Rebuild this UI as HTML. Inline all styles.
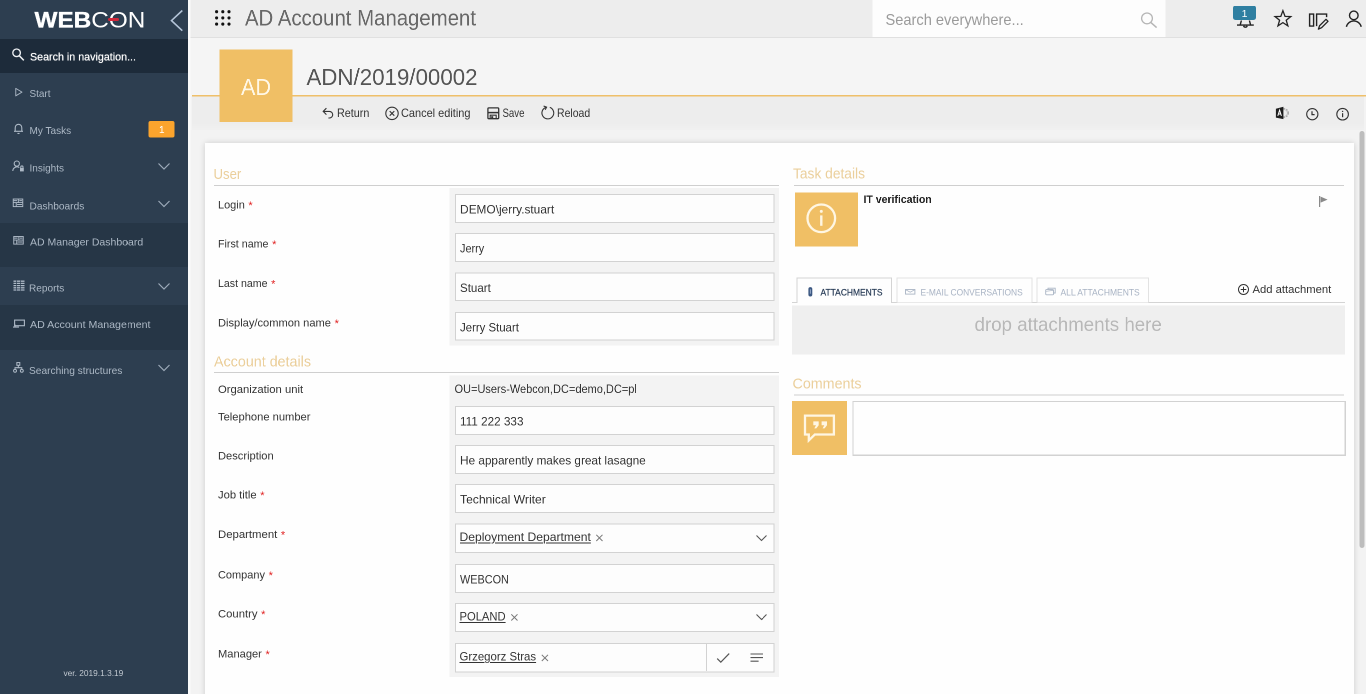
<!DOCTYPE html>
<html lang="en"><head><meta charset="utf-8"><title>AD Account Management</title>
<style>
html,body{margin:0;padding:0}
body{width:1366px;height:694px;overflow:hidden;position:relative;background:#f3f3f3;font-family:"Liberation Sans",sans-serif;}
#s{will-change:transform;position:absolute;left:0;top:0;width:2732px;height:1388px;transform:scale(.5);transform-origin:0 0;overflow:hidden}
.b{position:absolute;box-sizing:border-box;display:block}
.t{position:absolute;white-space:nowrap;transform-origin:0 50%;display:block}
.u{text-decoration:underline;text-decoration-thickness:1.6px;text-underline-offset:3px}
</style></head><body><div id="s">
<div class="b" style="left:376px;top:0px;width:2356px;height:76px;background:#ededed;border-bottom:2px solid #e0e0e0;"></div>
<div class="b" style="left:376px;top:76px;width:2356px;height:116px;background:#f5f5f5;"></div>
<div class="b" style="left:384px;top:193px;width:2344px;height:67px;background:linear-gradient(#ededed 0%,#ededed 75%,#f1f1f1 100%);"></div>
<div class="b" style="left:384px;top:190px;width:2348px;height:3px;background:#efc06a;"></div>
<div class="b" style="left:376px;top:0px;width:5px;height:1388px;background:#fbfbfb;"></div>
<div class="b" style="left:0px;top:0px;width:376px;height:1388px;background:#2d3e50;"></div>
<div class="b" style="left:0px;top:78px;width:376px;height:68px;background:#1d2b3a;"></div>
<div class="b" style="left:0px;top:446px;width:376px;height:88px;background:#263646;"></div>
<div class="b" style="left:0px;top:610px;width:376px;height:90px;background:#263646;"></div>
<span class="t" style="left:68.8px;top:14px;font-size:44px;line-height:51px;color:#fff;transform:scaleX(1.1056);"><b style="-webkit-text-stroke:0.7px #fff">WEB</b>CON</span>
<div class="b" style="left:216px;top:36px;width:22px;height:6px;background:#d2283a;border-radius:3px;"></div>
<svg class="b" style="left:336px;top:16px;" width="36" height="52" viewBox="0 0 18 26"><path d="M14.3 2.5 L3.5 12.6 L14.3 22.7" fill="none" stroke="#b4c4d8" stroke-width="1.6"/></svg>
<svg class="b" style="left:22px;top:94px;" width="30" height="30" viewBox="0 0 15 15"><circle cx="5.6" cy="5.8" r="3.8" fill="none" stroke="#eef1f4" stroke-width="1.35"/><path d="M8.4 8.8 L12.8 13.4" stroke="#eef1f4" stroke-width="1.5" fill="none"/></svg>
<span class="t " style="left:60.0px;top:100px;font-size:22px;line-height:27px;color:#fff;transform:scaleX(0.9738);text-shadow:0 0 1.2px #fff;">Search in navigation...</span>
<span class="t " style="left:58.6px;top:174px;font-size:21px;line-height:25px;color:#adb9c6;transform:scaleX(0.9470);">Start</span>
<span class="t " style="left:58.6px;top:248px;font-size:21px;line-height:25px;color:#adb9c6;transform:scaleX(0.9572);">My Tasks</span>
<span class="t " style="left:58.6px;top:323px;font-size:21px;line-height:25px;color:#adb9c6;transform:scaleX(0.9534);">Insights</span>
<span class="t " style="left:58.6px;top:399px;font-size:21px;line-height:25px;color:#adb9c6;transform:scaleX(0.9679);">Dashboards</span>
<span class="t " style="left:60.0px;top:471px;font-size:21px;line-height:25px;color:#adb9c6;transform:scaleX(0.9997);">AD Manager Dashboard</span>
<span class="t " style="left:58.0px;top:563px;font-size:21px;line-height:25px;color:#adb9c6;transform:scaleX(0.9601);">Reports</span>
<span class="t " style="left:60.0px;top:636px;font-size:21px;line-height:25px;color:#adb9c6;transform:scaleX(1.0120);">AD Account Management</span>
<span class="t " style="left:58.0px;top:728px;font-size:21px;line-height:25px;color:#adb9c6;transform:scaleX(0.9699);">Searching structures</span>
<span class="t " style="left:126.6px;top:1336px;font-size:17px;line-height:21px;color:#c3cad2;transform:scaleX(0.9809);">ver. 2019.1.3.19</span>
<div class="b" style="left:296.6px;top:242.4px;width:52px;height:32.8px;background:#fba42d;border-radius:4px;"></div>
<span class="t " style="left:318.0px;top:247px;font-size:20px;line-height:24px;color:#fff;">1</span>
<svg class="b" style="left:314px;top:324px;" width="28" height="18" viewBox="0 0 14 9"><path d="M1.5 1.5 L7 7 L12.5 1.5" fill="none" stroke="#9dabba" stroke-width="1.2"/></svg>
<svg class="b" style="left:314px;top:399px;" width="28" height="18" viewBox="0 0 14 9"><path d="M1.5 1.5 L7 7 L12.5 1.5" fill="none" stroke="#9dabba" stroke-width="1.2"/></svg>
<svg class="b" style="left:314px;top:563.6px;" width="28" height="18" viewBox="0 0 14 9"><path d="M1.5 1.5 L7 7 L12.5 1.5" fill="none" stroke="#9dabba" stroke-width="1.2"/></svg>
<svg class="b" style="left:314px;top:727px;" width="28" height="18" viewBox="0 0 14 9"><path d="M1.5 1.5 L7 7 L12.5 1.5" fill="none" stroke="#9dabba" stroke-width="1.2"/></svg>
<svg class="b" style="left:28px;top:174px;" width="19.0" height="20.4" viewBox="0 0 11 12"><path d="M2 1.6 L9.3 6 L2 10.4 Z" fill="none" stroke="#adb9c6" stroke-width="1.1" stroke-linejoin="round"/></svg>
<svg class="b" style="left:24px;top:244px;" width="26" height="26" viewBox="0 0 13 13"><path d="M3.2 9.2 V5.6 a3.3 3.3 0 0 1 6.6 0 V9.2 M2 9.3 H11 M5.6 11 a1 1 0 0 0 1.8 0" fill="none" stroke="#adb9c6" stroke-width="1.1"/></svg>
<svg class="b" style="left:24px;top:320px;" width="26" height="26" viewBox="0 0 13 13"><circle cx="4.8" cy="3.6" r="2.6" fill="none" stroke="#adb9c6" stroke-width="1.1"/><path d="M0.8 11 a4.2 4.2 0 0 1 6.5 -3.4" fill="none" stroke="#adb9c6" stroke-width="1.1"/><rect x="8" y="8" width="3.8" height="3.4" fill="#adb9c6"/><path d="M8.8 8 V7 a1.1 1.1 0 0 1 2.2 0 V8" fill="none" stroke="#adb9c6" stroke-width="1.1"/></svg>
<svg class="b" style="left:25.2px;top:397.2px;" width="22" height="17.6" viewBox="0 0 12 10"><rect x="0.6" y="0.6" width="10.8" height="8.6" fill="none" stroke="#adb9c6" stroke-width="1.1"/><path d="M0.6 4.6 H11.4 M6.4 0.6 V4.6 M4 4.6 V9.2 M1 2.4 H5 M7.5 2.4 H10.5 M5 6.8 H10.5" fill="none" stroke="#adb9c6" stroke-width="1.1"/></svg>
<svg class="b" style="left:25.6px;top:472px;" width="22" height="17.6" viewBox="0 0 12 10"><rect x="0.6" y="0.6" width="10.8" height="8.6" fill="none" stroke="#adb9c6" stroke-width="1.1"/><path d="M0.6 4.6 H11.4 M6.4 0.6 V4.6 M4 4.6 V9.2 M1 2.4 H5 M7.5 2.4 H10.5 M5 6.8 H10.5" fill="none" stroke="#adb9c6" stroke-width="1.1"/></svg>
<svg class="b" style="left:26px;top:560px;" width="24" height="22" viewBox="0 0 12 11"><path d="M0.5 1.2 H11.5 M0.5 3.4 H11.5 M0.5 5.6 H11.5 M0.5 7.8 H11.5 M0.5 10 H11.5" fill="none" stroke="#adb9c6" stroke-width="1.3"/><path d="M3.6 0.6 V10.6 M7.6 0.6 V10.6" stroke="#2d3e50" stroke-width="0.7"/></svg>
<svg class="b" style="left:26px;top:639.2px;" width="24" height="18" viewBox="0 0 12 9"><rect x="1.6" y="0.6" width="9.8" height="5.6" fill="none" stroke="#adb9c6" stroke-width="1.1"/><path d="M0 7.6 H6 M2 5 V7.6" fill="none" stroke="#adb9c6" stroke-width="1.1"/></svg>
<svg class="b" style="left:26px;top:724px;" width="22" height="22" viewBox="0 0 12 12"><rect x="4.2" y="0.6" width="3.2" height="3" fill="none" stroke="#adb9c6" stroke-width="1.1"/><path d="M5.8 3.6 V6.2 M2.2 8 V6.2 H9.6 V8" fill="none" stroke="#adb9c6" stroke-width="1.1"/><circle cx="2.2" cy="9.6" r="1.6" fill="none" stroke="#adb9c6" stroke-width="1.1"/><circle cx="9.6" cy="9.6" r="1.6" fill="none" stroke="#adb9c6" stroke-width="1.1"/></svg>
<svg class="b" style="left:428px;top:18px;" width="36" height="36" viewBox="0 0 18 18"><circle cx="2.6" cy="2.7" r="1.55" fill="#111"/><circle cx="2.6" cy="8.9" r="1.55" fill="#111"/><circle cx="2.6" cy="15.1" r="1.55" fill="#111"/><circle cx="8.8" cy="2.7" r="1.55" fill="#111"/><circle cx="8.8" cy="8.9" r="1.55" fill="#111"/><circle cx="8.8" cy="15.1" r="1.55" fill="#111"/><circle cx="15" cy="2.7" r="1.55" fill="#111"/><circle cx="15" cy="8.9" r="1.55" fill="#111"/><circle cx="15" cy="15.1" r="1.55" fill="#111"/></svg>
<span class="t " style="left:490.0px;top:10px;font-size:44.4px;line-height:51px;color:#686868;transform:scaleX(0.9176);">AD Account Management</span>
<div class="b" style="left:1745px;top:0px;width:586px;height:74px;background:#fdfdfd;"></div>
<span class="t " style="left:1771.2px;top:20px;font-size:32px;line-height:38px;color:#9a9a9a;transform:scaleX(0.9141);">Search everywhere...</span>
<svg class="b" style="left:2278px;top:22px;" width="40" height="36" viewBox="0 0 20 18"><circle cx="8" cy="7.4" r="5.4" fill="none" stroke="#b5b5b5" stroke-width="1.3"/><path d="M11.8 11.4 L17.6 16.6" stroke="#b5b5b5" stroke-width="1.5"/></svg>
<svg class="b" style="left:2472px;top:41.2px;" width="38" height="20" viewBox="0 0 19 10"><path d="M1 4.6 H17.8 M4.2 4.4 L5.4 0 M14.6 4.4 L13.4 0 M7.6 5.4 a1.9 1.9 0 0 0 3.6 0" fill="none" stroke="#222" stroke-width="1.4"/></svg>
<div class="b" style="left:2466px;top:11px;width:46px;height:29px;background:#2f7fa1;border-radius:5px;"></div>
<span class="t " style="left:2483.2px;top:14px;font-size:21px;line-height:25px;color:#fff;">1</span>
<svg class="b" style="left:2545.6px;top:18.4px;" width="40.4" height="36.8" viewBox="0 0 22 20"><path d="M10.8 1.8 L13.1 8 L19.4 8.2 L14.4 12.2 L16.2 18.4 L10.8 14.8 L5.4 18.4 L7.2 12.2 L2.2 8.2 L8.5 8 Z" fill="none" stroke="#222" stroke-width="1.4" stroke-linejoin="miter"/></svg>
<svg class="b" style="left:2616px;top:22.8px;" width="44" height="40" viewBox="0 0 22 20"><path d="M1.6 2.6 H5.6 V14.6 H1.6 Z" fill="none" stroke="#222" stroke-width="1.4"/><path d="M8.6 14.6 V2.6 H18.6 V5.6" fill="none" stroke="#222" stroke-width="1.4"/><path d="M10.4 17.6 L11.6 14.2 L18 7.8 L20 9.8 L13.6 16.2 Z" fill="none" stroke="#222" stroke-width="1.3" stroke-linejoin="round"/></svg>
<svg class="b" style="left:2690px;top:18px;" width="36" height="40" viewBox="0 0 18 20"><circle cx="8.8" cy="6.4" r="4.3" fill="none" stroke="#222" stroke-width="1.4"/><path d="M1.4 17.8 a7.6 7.6 0 0 1 14.8 0" fill="none" stroke="#222" stroke-width="1.4"/></svg>
<div class="b" style="left:439px;top:99px;width:146px;height:145px;background:#f0bf65;"></div>
<span class="t " style="left:482.0px;top:147px;font-size:46px;line-height:54px;color:#fff8e8;transform:scaleX(0.9389);">AD</span>
<span class="t " style="left:613.0px;top:126px;font-size:47px;line-height:55px;color:#555;transform:scaleX(0.9484);">ADN/2019/00002</span>
<svg class="b" style="left:642px;top:212px;" width="28" height="28" viewBox="0 0 14 14"><path d="M5.4 2.2 L2.2 5.4 L5.4 8.6 M2.4 5.4 H8.4 a3.3 3.3 0 0 1 0 6.6 H7.4" fill="none" stroke="#333" stroke-width="1.1"/></svg>
<span class="t " style="left:673.6px;top:212px;font-size:23.4px;line-height:28px;color:#333;transform:scaleX(0.9226);">Return</span>
<svg class="b" style="left:769px;top:212px;" width="30" height="30" viewBox="0 0 15 15"><circle cx="7.5" cy="7.4" r="6.2" fill="none" stroke="#333" stroke-width="1.1"/><path d="M5.2 5.1 L9.8 9.7 M9.8 5.1 L5.2 9.7" fill="none" stroke="#333" stroke-width="1.1"/></svg>
<span class="t " style="left:802.0px;top:212px;font-size:23.4px;line-height:28px;color:#333;transform:scaleX(0.9373);">Cancel editing</span>
<svg class="b" style="left:974px;top:214px;" width="26" height="26" viewBox="0 0 13 13"><rect x="0.9" y="0.9" width="10.8" height="10.8" rx="1" fill="none" stroke="#333" stroke-width="1.3"/><path d="M1 5.6 H11.6" stroke="#333" stroke-width="1.5"/><path d="M3.2 11.4 V8.2 H9.2 V11.4" fill="none" stroke="#333" stroke-width="1.1"/><rect x="4.2" y="9.2" width="2" height="2.2" fill="#333"/></svg>
<span class="t " style="left:1005.4px;top:212px;font-size:23.4px;line-height:28px;color:#333;transform:scaleX(0.8249);">Save</span>
<svg class="b" style="left:1080px;top:210px;" width="32" height="32" viewBox="0 0 16 16"><path d="M6.2 2.3 a5.9 5.9 0 1 0 3.6 0.1" fill="none" stroke="#333" stroke-width="1.1" stroke-width="1.2"/><path d="M3.6 1 L6.6 2.2 L5.2 4.8" fill="none" stroke="#333" stroke-width="1.1"/></svg>
<span class="t " style="left:1114.2px;top:212px;font-size:23.4px;line-height:28px;color:#333;transform:scaleX(0.8954);">Reload</span>
<svg class="b" style="left:2550px;top:212px;" width="30" height="28" viewBox="0 0 15 14"><circle cx="9" cy="7" r="4.3" fill="none" stroke="#a8a8a8" stroke-width="1.3" stroke-dasharray="1.7 1.1"/><circle cx="9" cy="7" r="3.4" fill="none" stroke="#c4c4c4" stroke-width="0.8"/><path d="M0.9 2.8 L8.4 0.7 V13.1 L0.9 11.6 Z" fill="#1e1e1e"/><path d="M2.8 9.9 L4.6 4.2 L6.4 9.9 M3.4 8 H5.8" fill="none" stroke="#fff" stroke-width="1"/></svg>
<svg class="b" style="left:2610px;top:214px;" width="30" height="30" viewBox="0 0 15 15"><circle cx="7.3" cy="7.2" r="5.6" fill="none" stroke="#333" stroke-width="1.1"/><path d="M7 4.2 V7.6 H9.6" fill="none" stroke="#333" stroke-width="1.2"/></svg>
<svg class="b" style="left:2670px;top:214px;" width="30" height="30" viewBox="0 0 15 15"><circle cx="7.6" cy="7.2" r="5.8" fill="none" stroke="#333" stroke-width="1.1"/><path d="M7.6 6.2 V10.2" stroke="#333" stroke-width="1.2"/><circle cx="7.6" cy="4.4" r="0.7" fill="#333"/></svg>
<div class="b" style="left:410px;top:286px;width:2298px;height:1120px;background:#fefefe;box-shadow:0 0 12px rgba(0,0,0,0.16);"></div>
<div class="b" style="left:2719px;top:262px;width:10px;height:834px;background:#bdbdbd;border-radius:5px;"></div>
<span class="t " style="left:427.4px;top:330px;font-size:29.6px;line-height:35px;color:#ebcf9b;transform:scaleX(0.8896);">User</span>
<div class="b" style="left:428px;top:370px;width:1130px;height:2px;background:#cfcfcf;"></div>
<div class="b" style="left:899px;top:376px;width:659px;height:314.6px;background:#f3f3f3;"></div>
<span class="t " style="left:428.4px;top:705px;font-size:29.6px;line-height:35px;color:#ebcf9b;transform:scaleX(0.9664);">Account details</span>
<div class="b" style="left:428px;top:744px;width:1130px;height:2px;background:#cfcfcf;"></div>
<div class="b" style="left:899px;top:751px;width:659px;height:603px;background:#f3f3f3;"></div>
<span class="t " style="left:436.4px;top:396px;font-size:22.6px;line-height:27px;color:#333;transform:scaleX(0.9693);">Login</span>
<span class="t " style="left:496.8px;top:397px;font-size:22px;line-height:27px;color:#e02020;">*</span>
<div class="b" style="left:910px;top:388px;width:639px;height:58px;background:#fdfdfd;border:2px solid #d2d2d2;"></div>
<span class="t " style="left:919.6px;top:405px;font-size:23.4px;line-height:28px;color:#333;transform:scaleX(1.0157);">DEMO\jerry.stuart</span>
<span class="t " style="left:436.4px;top:474px;font-size:22.6px;line-height:27px;color:#333;transform:scaleX(0.9462);">First name</span>
<span class="t " style="left:544.2px;top:475px;font-size:22px;line-height:27px;color:#e02020;">*</span>
<div class="b" style="left:910px;top:466px;width:639px;height:58px;background:#fdfdfd;border:2px solid #d2d2d2;"></div>
<span class="t " style="left:919.6px;top:483px;font-size:23.4px;line-height:28px;color:#333;transform:scaleX(0.9308);">Jerry</span>
<span class="t " style="left:436.4px;top:553px;font-size:22.6px;line-height:27px;color:#333;transform:scaleX(0.9381);">Last name</span>
<span class="t " style="left:542.2px;top:554px;font-size:22px;line-height:27px;color:#e02020;">*</span>
<div class="b" style="left:910px;top:545px;width:639px;height:57px;background:#fdfdfd;border:2px solid #d2d2d2;"></div>
<span class="t " style="left:919.6px;top:562px;font-size:23.4px;line-height:28px;color:#333;transform:scaleX(0.9867);">Stuart</span>
<span class="t " style="left:436.4px;top:632px;font-size:22.6px;line-height:27px;color:#333;transform:scaleX(0.9832);">Display/common name</span>
<span class="t " style="left:669.2px;top:633px;font-size:22px;line-height:27px;color:#e02020;">*</span>
<div class="b" style="left:910px;top:624px;width:639px;height:57px;background:#fdfdfd;border:2px solid #d2d2d2;"></div>
<span class="t " style="left:919.6px;top:641px;font-size:23.4px;line-height:28px;color:#333;transform:scaleX(0.9741);">Jerry Stuart</span>
<span class="t " style="left:436.4px;top:820px;font-size:22.6px;line-height:27px;color:#333;transform:scaleX(0.9882);">Telephone number</span>
<div class="b" style="left:910px;top:812px;width:639px;height:58px;background:#fdfdfd;border:2px solid #d2d2d2;"></div>
<span class="t " style="left:919.6px;top:829px;font-size:23.4px;line-height:28px;color:#333;transform:scaleX(1.0027);">111 222 333</span>
<span class="t " style="left:436.4px;top:898px;font-size:22.6px;line-height:27px;color:#333;transform:scaleX(0.9854);">Description</span>
<div class="b" style="left:910px;top:890px;width:639px;height:58px;background:#fdfdfd;border:2px solid #d2d2d2;"></div>
<span class="t " style="left:919.6px;top:907px;font-size:23.4px;line-height:28px;color:#333;transform:scaleX(1.0059);">He apparently makes great lasagne</span>
<span class="t " style="left:436.4px;top:976px;font-size:22.6px;line-height:27px;color:#333;transform:scaleX(0.9912);">Job title</span>
<span class="t " style="left:520.4px;top:977px;font-size:22px;line-height:27px;color:#e02020;">*</span>
<div class="b" style="left:910px;top:968px;width:639px;height:58px;background:#fdfdfd;border:2px solid #d2d2d2;"></div>
<span class="t " style="left:919.6px;top:985px;font-size:23.4px;line-height:28px;color:#333;transform:scaleX(1.0324);">Technical Writer</span>
<span class="t " style="left:436.4px;top:1055px;font-size:22.6px;line-height:27px;color:#333;transform:scaleX(1.0044);">Department</span>
<span class="t " style="left:561.8px;top:1056px;font-size:22px;line-height:27px;color:#e02020;">*</span>
<div class="b" style="left:910px;top:1047px;width:639px;height:59px;background:#fdfdfd;border:2px solid #d2d2d2;"></div>
<span class="t u" style="left:919.2px;top:1060px;font-size:23.4px;line-height:28px;color:#333;transform:scaleX(1.0362);">Deployment Department</span>
<span class="t " style="left:436.4px;top:1136px;font-size:22.6px;line-height:27px;color:#333;transform:scaleX(0.9718);">Company</span>
<span class="t " style="left:537.2px;top:1137px;font-size:22px;line-height:27px;color:#e02020;">*</span>
<div class="b" style="left:910px;top:1128px;width:639px;height:58px;background:#fdfdfd;border:2px solid #d2d2d2;"></div>
<span class="t " style="left:919.6px;top:1145px;font-size:23.4px;line-height:28px;color:#333;transform:scaleX(0.9288);">WEBCON</span>
<span class="t " style="left:436.4px;top:1214px;font-size:22.6px;line-height:27px;color:#333;transform:scaleX(0.9983);">Country</span>
<span class="t " style="left:522.2px;top:1215px;font-size:22px;line-height:27px;color:#e02020;">*</span>
<div class="b" style="left:910px;top:1206px;width:639px;height:58px;background:#fdfdfd;border:2px solid #d2d2d2;"></div>
<span class="t u" style="left:919.2px;top:1219px;font-size:23.4px;line-height:28px;color:#333;transform:scaleX(0.9581);">POLAND</span>
<span class="t " style="left:436.4px;top:1294px;font-size:22.6px;line-height:27px;color:#333;transform:scaleX(0.9843);">Manager</span>
<span class="t " style="left:531.0px;top:1295px;font-size:22px;line-height:27px;color:#e02020;">*</span>
<div class="b" style="left:910px;top:1286px;width:639px;height:59px;background:#fdfdfd;border:2px solid #d2d2d2;"></div>
<span class="t u" style="left:919.2px;top:1299px;font-size:23.4px;line-height:28px;color:#333;transform:scaleX(0.9736);">Grzegorz Stras</span>
<span class="t " style="left:436.4px;top:765px;font-size:22px;line-height:27px;color:#333;transform:scaleX(1.0233);">Organization unit</span>
<span class="t " style="left:909.4px;top:764px;font-size:23px;line-height:28px;color:#333;transform:scaleX(0.9566);">OU=Users-Webcon,DC=demo,DC=pl</span>
<svg class="b" style="left:1191.2px;top:1068px;" width="16" height="16" viewBox="0 0 8 8"><path d="M0.8 0.8 L7 7 M7 0.8 L0.8 7" stroke="#777" stroke-width="1" fill="none"/></svg>
<svg class="b" style="left:1021.2px;top:1226.6px;" width="16" height="16" viewBox="0 0 8 8"><path d="M0.8 0.8 L7 7 M7 0.8 L0.8 7" stroke="#777" stroke-width="1" fill="none"/></svg>
<svg class="b" style="left:1082.4px;top:1307.6px;" width="16" height="16" viewBox="0 0 8 8"><path d="M0.8 0.8 L7 7 M7 0.8 L0.8 7" stroke="#777" stroke-width="1" fill="none"/></svg>
<svg class="b" style="left:1511px;top:1068.6px;" width="24" height="16" viewBox="0 0 12 8"><path d="M1 1 L6 6 L11 1" fill="none" stroke="#555" stroke-width="1.1"/></svg>
<svg class="b" style="left:1511px;top:1227.2px;" width="24" height="16" viewBox="0 0 12 8"><path d="M1 1 L6 6 L11 1" fill="none" stroke="#555" stroke-width="1.1"/></svg>
<div class="b" style="left:1412px;top:1288px;width:2px;height:54px;background:#d2d2d2;"></div>
<svg class="b" style="left:1432px;top:1304px;" width="30" height="24" viewBox="0 0 15 12"><path d="M1.2 6.6 L4.8 10.2 L13.2 1.6" fill="none" stroke="#555" stroke-width="1.2"/></svg>
<svg class="b" style="left:1500px;top:1306px;" width="28" height="20" viewBox="0 0 14 10"><path d="M0.5 1 H12.8 M0.5 4.6 H12.8 M0.5 8.2 H8.6" fill="none" stroke="#555" stroke-width="1.1"/></svg>
<span class="t " style="left:1586.0px;top:329px;font-size:29.6px;line-height:35px;color:#ebcf9b;transform:scaleX(0.9311);">Task details</span>
<div class="b" style="left:1588px;top:370px;width:1100px;height:2px;background:#cfcfcf;"></div>
<div class="b" style="left:1590px;top:384.6px;width:126px;height:108.6px;background:#f0bf65;"></div>
<svg class="b" style="left:1610px;top:404px;" width="66" height="66" viewBox="0 0 33 33"><circle cx="16.3" cy="16.3" r="13.8" fill="none" stroke="#fff6e2" stroke-width="2.3"/><path d="M16.3 13.4 V23.8" stroke="#fff6e2" stroke-width="2.4"/><circle cx="16.3" cy="9.4" r="1.5" fill="#fff6e2"/></svg>
<span class="t " style="left:1727.0px;top:385px;font-size:22px;line-height:27px;color:#222;font-weight:bold;transform:scaleX(0.9536);">IT verification</span>
<svg class="b" style="left:2636px;top:390px;" width="22" height="26" viewBox="0 0 11 13"><path d="M1.6 1 V12" stroke="#8a8a8a" stroke-width="1.2"/><path d="M2.6 1.6 L9.6 4.6 L2.6 7.6 Z" fill="#8a8a8a"/></svg>
<div class="b" style="left:1584px;top:604px;width:1106px;height:2px;background:#d4d4d4;"></div>
<div class="b" style="left:1593px;top:555px;width:191px;height:51px;background:#fefefe;border:2px solid #d4d4d4;border-bottom:none;"></div>
<div class="b" style="left:1792.6px;top:555px;width:272px;height:50px;background:#fefefe;border:2px solid #e2e2e2;border-bottom:none;"></div>
<div class="b" style="left:2073.4px;top:555px;width:225px;height:50px;background:#fefefe;border:2px solid #e2e2e2;border-bottom:none;"></div>
<svg class="b" style="left:1614.6px;top:572.6px;" width="12" height="22" viewBox="0 0 6 11"><rect x="0.9" y="0.6" width="3.9" height="9.4" rx="1.95" fill="#3c5882"/><path d="M2.85 2.8 V7.2" stroke="#9fb2d0" stroke-width="0.9"/></svg>
<span class="t " style="left:1640.6px;top:573px;font-size:18.8px;line-height:23px;color:#263a55;transform:scaleX(0.8986);-webkit-text-stroke:0.4px #263a55;">ATTACHMENTS</span>
<svg class="b" style="left:1810px;top:578px;" width="22" height="12" viewBox="0 0 11 6"><rect x="0.5" y="0.5" width="9.4" height="4.6" fill="none" stroke="#a9b4c4" stroke-width="0.9"/><path d="M0.8 0.8 L5.2 3.2 L9.6 0.8" fill="none" stroke="#a9b4c4" stroke-width="0.8"/></svg>
<span class="t " style="left:1841.0px;top:573px;font-size:18.8px;line-height:23px;color:#a7b2c3;transform:scaleX(0.8943);">E-MAIL CONVERSATIONS</span>
<svg class="b" style="left:2090px;top:574.4px;" width="22" height="18" viewBox="0 0 11 9"><path d="M3 2.4 V1.2 H10.2 V6 H8.6" fill="none" stroke="#a9b4c4" stroke-width="0.9"/><rect x="0.7" y="2.6" width="7.8" height="5.2" rx="0.8" fill="none" stroke="#a9b4c4" stroke-width="0.9"/><path d="M0.8 4.3 L8.4 3.4" stroke="#a9b4c4" stroke-width="0.7"/></svg>
<span class="t " style="left:2120.8px;top:573px;font-size:18.8px;line-height:23px;color:#a7b2c3;transform:scaleX(0.9055);">ALL ATTACHMENTS</span>
<svg class="b" style="left:2475px;top:567px;" width="24" height="24" viewBox="0 0 12 12"><circle cx="6" cy="6" r="5" fill="none" stroke="#333" stroke-width="1"/><path d="M6 3.2 V8.8 M3.2 6 H8.8" stroke="#333" stroke-width="1"/></svg>
<span class="t " style="left:2504.6px;top:565px;font-size:22px;line-height:27px;color:#333;transform:scaleX(1.0214);">Add attachment</span>
<div class="b" style="left:1584px;top:610.6px;width:1106px;height:98.6px;background:#efefef;"></div>
<span class="t " style="left:1949.4px;top:626px;font-size:39px;line-height:45px;color:#b8b8b8;transform:scaleX(0.9599);">drop attachments here</span>
<span class="t " style="left:1585.0px;top:749px;font-size:29.6px;line-height:35px;color:#ebcf9b;transform:scaleX(0.9657);">Comments</span>
<div class="b" style="left:1588px;top:789.2px;width:1100px;height:2px;background:#cfcfcf;"></div>
<div class="b" style="left:1584px;top:802px;width:110px;height:108px;background:#f0bf65;"></div>
<svg class="b" style="left:1604px;top:824px;" width="72" height="64" viewBox="0 0 36 32"><path d="M3 3.6 H31.9 V22.5 H12.8 L6.8 28.4 V22.5 H3 Z" fill="none" stroke="#fff6e2" stroke-width="2.3" stroke-linejoin="miter"/><path d="M11.3 9.4 h5.4 v3.8 l-2.4 3.2 h-2 l1.7 -3.2 h-2.7 Z M19.6 9.4 h5.4 v3.8 l-2.4 3.2 h-2 l1.7 -3.2 h-2.7 Z" fill="#fff6e2"/></svg>
<div class="b" style="left:1704.6px;top:802px;width:986px;height:109px;background:#fefefe;border:2px solid #d2d2d2;"></div>
</div></body></html>
